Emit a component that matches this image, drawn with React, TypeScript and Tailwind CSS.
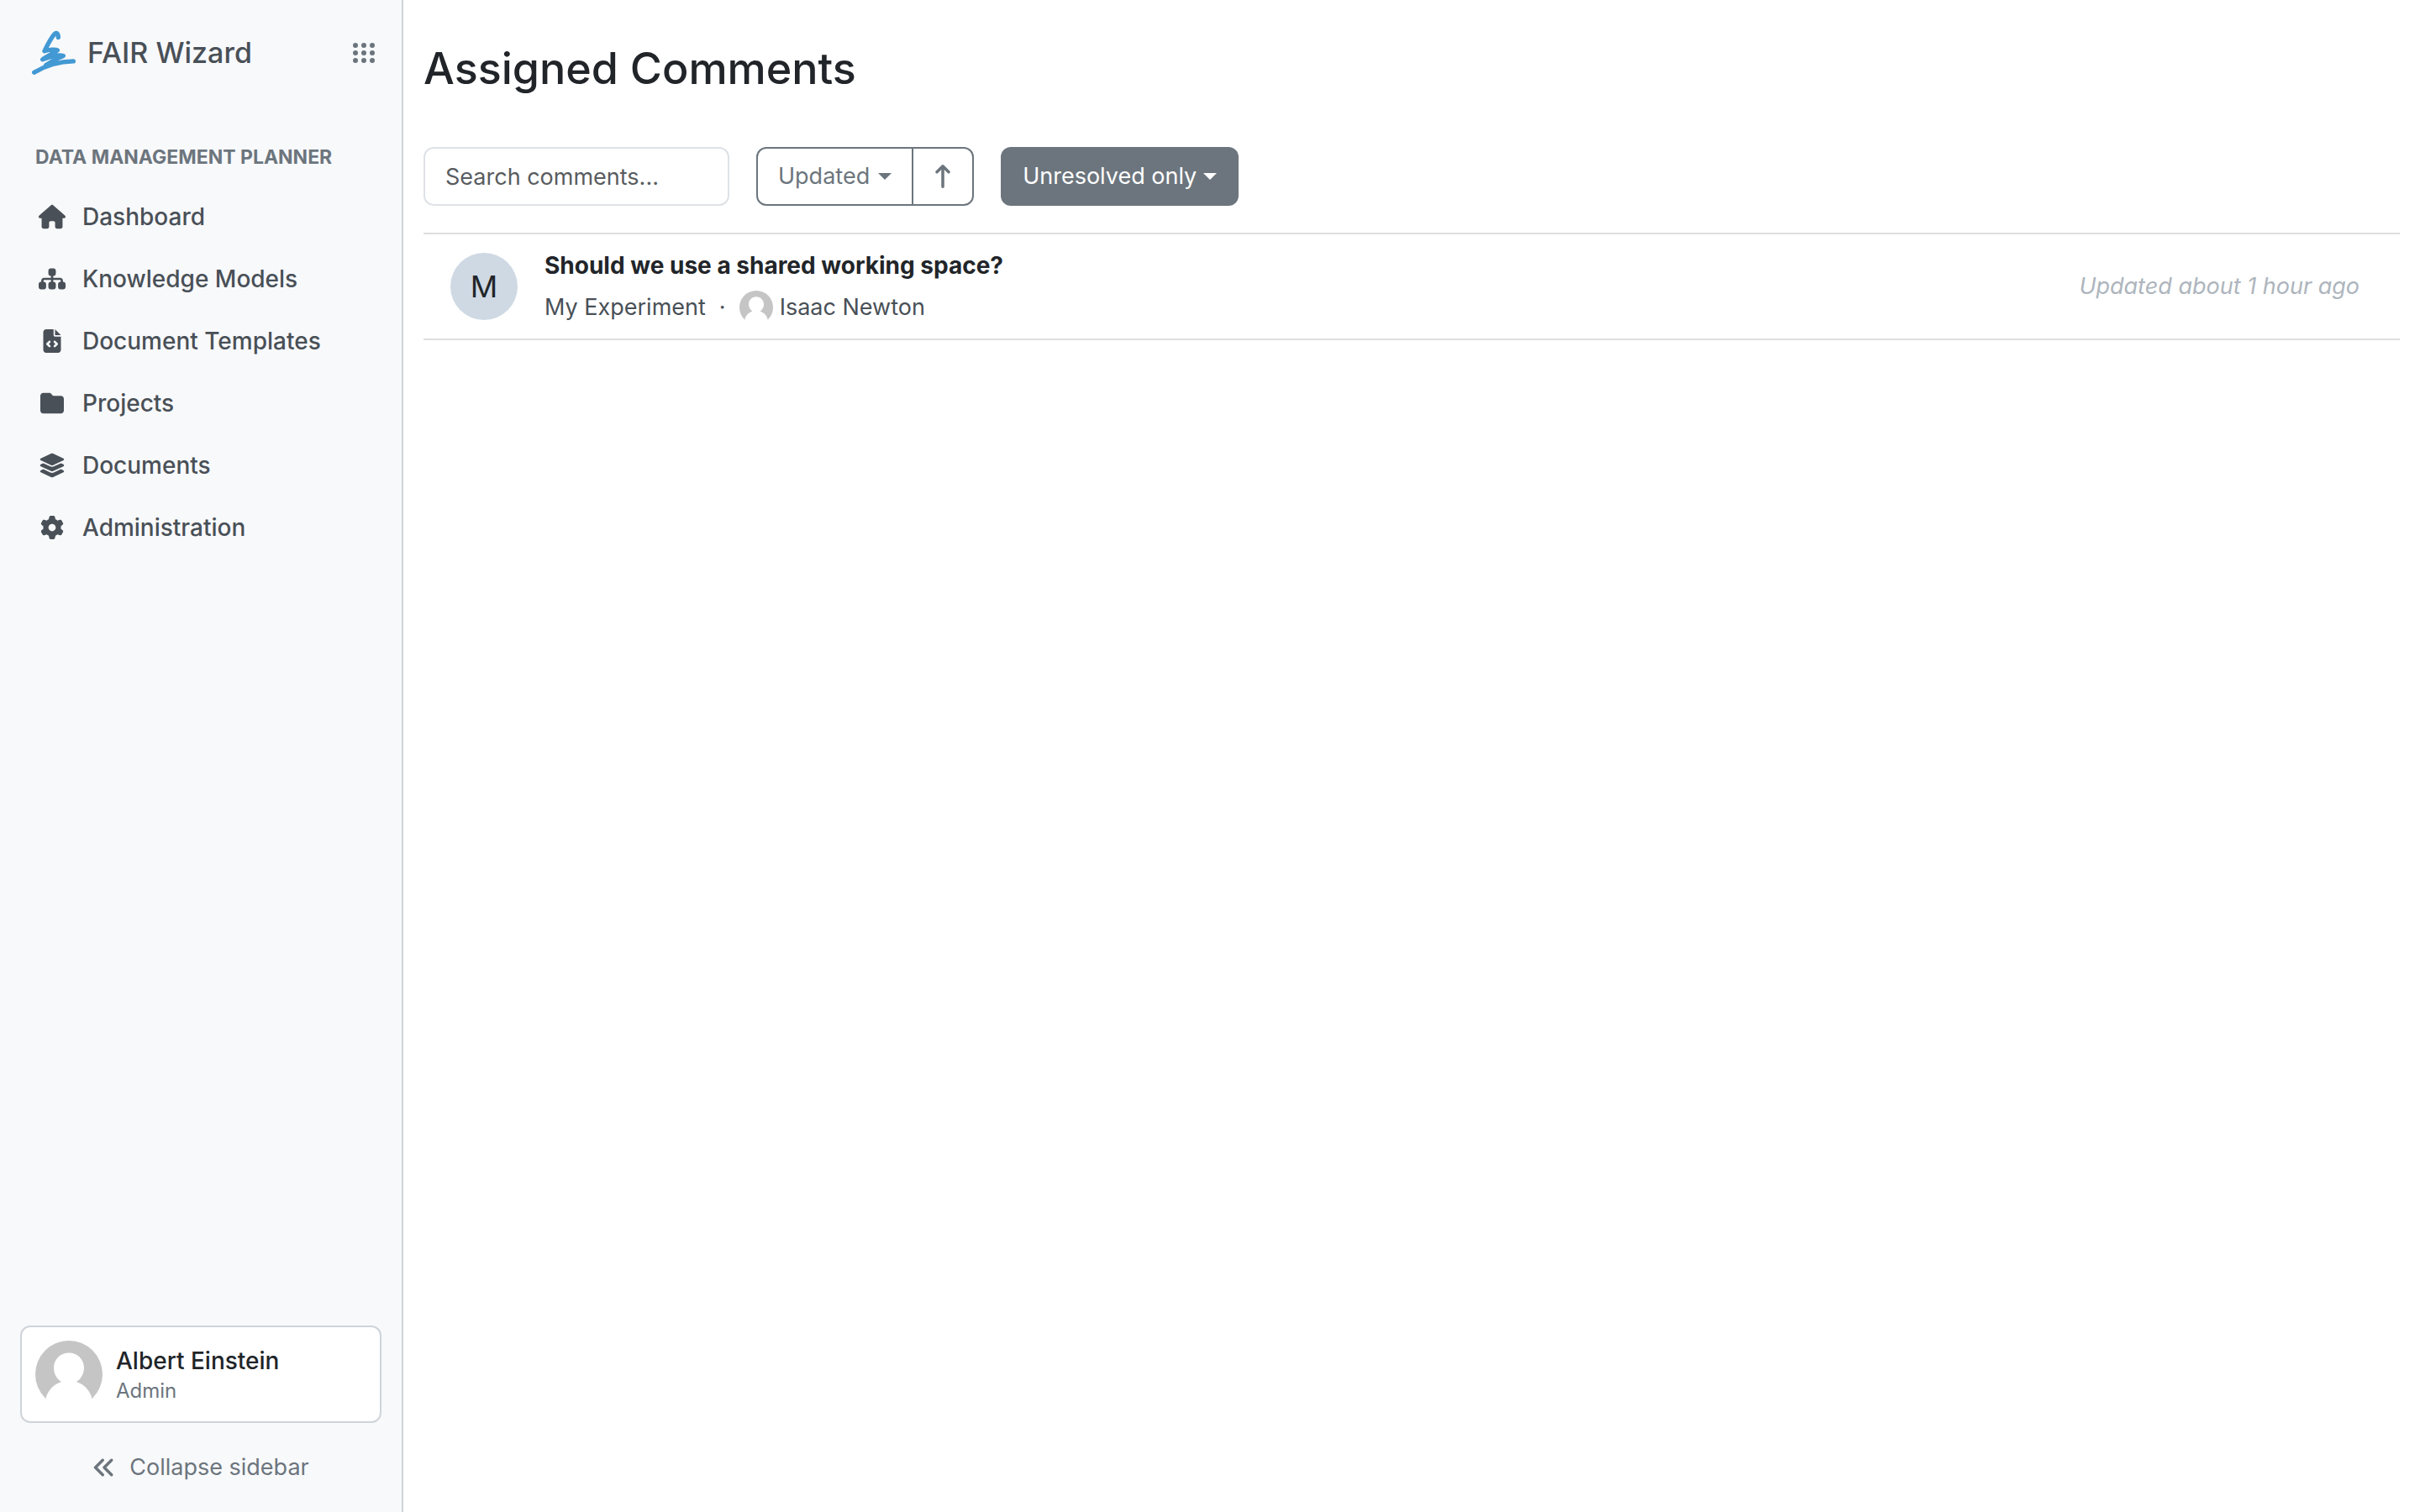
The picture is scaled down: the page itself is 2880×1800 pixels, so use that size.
import React from "react";
import {
  FaAnglesLeft,
  FaArrowUpLong,
  FaFileCode,
  FaFolder,
  FaGear,
  FaHouse,
  FaLayerGroup,
  FaSitemap,
} from "react-icons/fa6";

const navItems = [
  { label: "Dashboard", Icon: FaHouse, size: "size-8" },
  { label: "Knowledge Models", Icon: FaSitemap, size: "size-8" },
  { label: "Document Templates", Icon: FaFileCode, size: "size-7" },
  { label: "Projects", Icon: FaFolder, size: "size-7" },
  { label: "Documents", Icon: FaLayerGroup, size: "size-8" },
  { label: "Administration", Icon: FaGear, size: "size-7" },
];

function Logo() {
  return (
    <svg viewBox="26 46 156 158" className="h-[53px] w-[52px]" fill="none" aria-hidden="true">
      <path
        d="M120 71C121 58 114 51 106 60C92 76 82 97 71 120C85 115 110 113 117 117C106 127 80 138 64 150C90 140 122 132 138 137C116 145 92 160 76 170M34 196C76 171 116 157 174 156"
        stroke="#4299d3"
        strokeWidth="16"
        strokeLinecap="round"
        strokeLinejoin="round"
      />
    </svg>
  );
}

function GridDots() {
  return (
    <svg viewBox="0 0 26 24" className="h-6 w-[26px]" fill="currentColor" aria-hidden="true">
      {[3, 12, 21].map((y) => [3, 13, 23].map((x) => <circle key={`${x}-${y}`} cx={x} cy={y} r="3" />))}
    </svg>
  );
}

function Caret() {
  return (
    <svg viewBox="0 0 16 8" className="h-2 w-4" fill="currentColor" aria-hidden="true">
      <path d="M0 0h16L8 8z" />
    </svg>
  );
}

function Avatar({ className }: { className: string }) {
  return (
    <svg viewBox="0 0 80 80" className={`shrink-0 rounded-full ${className}`} aria-hidden="true">
      <rect width="80" height="70" fill="#c5c5c5" />
      <path
        d="M40 14.500c-10.500 0-18 8-18 18 0 7 3.500 13 9 16.500C21 52 14 61 12.500 69L12 82h56l-.5-13C66 61 59 52 49 49c5.500-3.500 9-9.500 9-16.500 0-10-7.500-18-18-18z"
        fill="#fff"
      />
    </svg>
  );
}

function Sidebar() {
  return (
    <aside className="flex w-[480px] shrink-0 flex-col border-r-2 border-[#ced4da] bg-[#f8f9fb] text-[#495057]">
      <header className="flex items-center justify-between pt-9 pr-8 pl-[38px]">
        <a href="#home" className="flex items-center gap-3.5 text-[34px] leading-[53px] font-medium">
          <Logo />
          <span>FAIR Wizard</span>
        </a>
        <button type="button" aria-label="Modules" className="text-[#6c757d]">
          <GridDots />
        </button>
      </header>

      <nav aria-label="Data Management Planner" className="mt-[82px]">
        <h2 className="px-[42px] text-[23px] leading-8 font-bold text-[#6c757d] uppercase">
          Data Management Planner
        </h2>
        <ul className="mt-[18px]">
          {navItems.map(({ label, Icon, size }) => (
            <li key={label}>
              <a href="#nav" className="flex h-[74px] items-center gap-5 px-[46px] text-[28px] font-medium">
                <span className="flex w-8 justify-center">
                  <Icon className={size} />
                </span>
                {label}
              </a>
            </li>
          ))}
        </ul>
      </nav>

      <div className="mt-auto px-6">
        <button
          type="button"
          className="flex w-full items-center gap-4 rounded-xl border-2 border-[#ced4da] bg-white p-4 text-left"
        >
          <Avatar className="size-20" />
          <span className="flex flex-col">
            <span className="text-[28px] leading-10 font-medium text-[#212529]">Albert Einstein</span>
            <span className="text-[24px] leading-8 text-[#6c757d]">Admin</span>
          </span>
        </button>
        <button
          type="button"
          className="mt-[22px] mb-[22px] flex h-[62px] w-full items-center justify-center gap-4 text-[27px] text-[#6c757d]"
        >
          <FaAnglesLeft className="size-7" />
          Collapse sidebar
        </button>
      </div>
    </aside>
  );
}

function Filters() {
  return (
    <div className="mt-[53px] flex gap-8 text-[27px]">
      <input
        type="text"
        aria-label="Search comments"
        placeholder="Search comments..."
        className="h-[70px] w-[364px] rounded-xl border-2 border-[#dee2e6] px-6 placeholder:text-[#595c5f]"
      />
      <div className="flex h-[70px] rounded-xl border-2 border-[#6c757d] text-[#6c757d]">
        <button type="button" className="flex items-center gap-2.5 border-r-2 border-[#6c757d] px-6">
          Updated
          <Caret />
        </button>
        <button type="button" aria-label="Sort ascending" className="flex w-[70px] items-center justify-center">
          <FaArrowUpLong className="size-7" />
        </button>
      </div>
      <button type="button" className="flex h-[70px] items-center gap-2 rounded-xl bg-[#6c757d] px-[26px] text-white">
        Unresolved only
        <Caret />
      </button>
    </div>
  );
}

function CommentRow() {
  return (
    <li className="flex items-center gap-8 border-y-2 border-[#dedede] py-[17px] pr-12 pl-8">
      <div className="flex size-20 shrink-0 items-center justify-center rounded-full bg-[#cfd9e4] text-[36px] text-[#212529]">
        M
      </div>
      <div className="flex grow flex-col">
        <a href="#comment" className="text-[28px] leading-10 font-bold text-[#212529]">
          Should we use a shared working space?
        </a>
        <div className="mt-2.5 flex h-10 items-center text-[27px] text-[#495057]">
          <a href="#project">My Experiment</a>
          <span className="px-4">·</span>
          <Avatar className="size-10" />
          <span className="pl-2">Isaac Newton</span>
        </div>
      </div>
      <span className="text-[27px] text-[#adb5bd] italic">Updated about 1 hour ago</span>
    </li>
  );
}

export default function App() {
  return (
    <div className="flex min-h-screen bg-white font-['Inter',sans-serif]">
      <Sidebar />
      <main className="grow px-6 pt-[42px]">
        <h1 className="text-[52px] leading-[80px] font-medium text-[#212529]">Assigned Comments</h1>
        <Filters />
        <ul className="mt-8">
          <CommentRow />
        </ul>
      </main>
    </div>
  );
}
